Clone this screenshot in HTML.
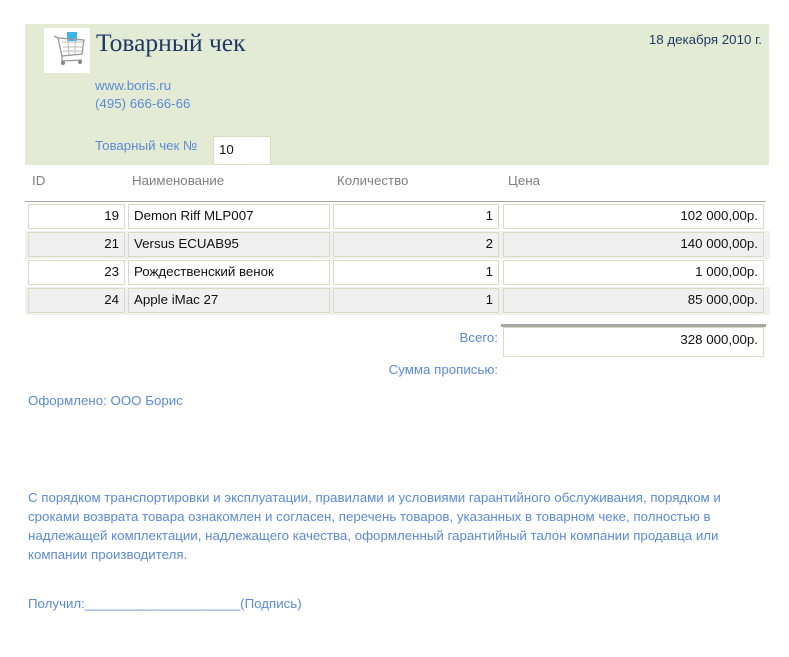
<!DOCTYPE html>
<html><head><meta charset="utf-8"><style>
body{margin:0;width:789px;height:657px;background:#fff;position:relative;font-family:"Liberation Sans",sans-serif;font-size:13.3px;overflow:hidden}
.a{position:absolute;white-space:nowrap}
.b{color:#5b8ad6}
.g{color:#7f7f7f}
.box{position:absolute;border:1px solid #ddd8c2;background:#fff;box-sizing:border-box;height:25px;line-height:22px;padding:0 5px;color:#111}
.r{text-align:right}
</style></head><body>
<div class="a" style="left:25px;top:24px;width:744px;height:141px;background:#e4ebd5"></div>
<div class="a" style="left:44px;top:28px;width:46px;height:45px;background:#fff"></div>
<svg class="a" style="left:50px;top:30px" width="40" height="40" viewBox="0 0 40 40">
<rect x="17" y="2" width="10" height="9" fill="#3cb4e8"/>
<path d="M8 8 L12 26 L32 24 L34 10 Z" fill="none" stroke="#999" stroke-width="1.3"/>
<path d="M12 12 L33 12 M13 17 L33 17 M13 21 L32 21 M18 9 L19 25 M25 9 L25 24" stroke="#bbb" stroke-width="1"/>
<path d="M4 6 L8 8 M12 26 L12 31 L32 30" stroke="#999" stroke-width="1.3" fill="none"/>
<circle cx="13" cy="33" r="2" fill="#888"/><circle cx="30" cy="32" r="2" fill="#888"/>
</svg>
<div class="a" style="left:96px;top:28px;font-family:'Liberation Serif',serif;font-size:25.5px;color:#1f3a68">Товарный чек</div>
<div class="a r" style="right:27px;top:32px;color:#1f3a68">18 декабря 2010 г.</div>
<div class="a b" style="left:95px;top:78px">www.boris.ru</div>
<div class="a b" style="left:95px;top:96px">(495) 666-66-66</div>
<div class="a b" style="left:95px;top:138px">Товарный чек №</div>
<div class="box" style="left:213px;top:136px;width:58px;height:29px;line-height:22px;padding-top:2px">10</div>
<div class="a g" style="left:32px;top:173px">ID</div>
<div class="a g" style="left:132px;top:173px">Наименование</div>
<div class="a g" style="left:337px;top:173px">Количество</div>
<div class="a g" style="left:508px;top:173px">Цена</div>
<div class="a" style="left:25px;top:201px;width:741px;height:1px;background:#a6a6a6"></div>
<div class="a" style="left:25px;top:231px;width:745px;height:28px;background:#f0f0f0"></div>
<div class="a" style="left:25px;top:287px;width:745px;height:28px;background:#f0f0f0"></div>

<div class="box r" style="left:28px;top:204px;width:97px">19</div>
<div class="box" style="left:128px;top:204px;width:202px">Demon Riff MLP007</div>
<div class="box r" style="left:333px;top:204px;width:166px">1</div>
<div class="box r" style="left:503px;top:204px;width:261px">102 000,00р.</div>

<div class="box r" style="left:28px;top:232px;width:97px;background:#f0f0f0">21</div>
<div class="box" style="left:128px;top:232px;width:202px;background:#f0f0f0">Versus ECUAB95</div>
<div class="box r" style="left:333px;top:232px;width:166px;background:#f0f0f0">2</div>
<div class="box r" style="left:503px;top:232px;width:261px;background:#f0f0f0">140 000,00р.</div>

<div class="box r" style="left:28px;top:260px;width:97px">23</div>
<div class="box" style="left:128px;top:260px;width:202px">Рождественский венок</div>
<div class="box r" style="left:333px;top:260px;width:166px">1</div>
<div class="box r" style="left:503px;top:260px;width:261px">1 000,00р.</div>

<div class="box r" style="left:28px;top:288px;width:97px;background:#f0f0f0">24</div>
<div class="box" style="left:128px;top:288px;width:202px;background:#f0f0f0">Apple iMac 27</div>
<div class="box r" style="left:333px;top:288px;width:166px;background:#f0f0f0">1</div>
<div class="box r" style="left:503px;top:288px;width:261px;background:#f0f0f0">85 000,00р.</div>

<div class="a" style="left:501px;top:324px;width:265px;height:3px;background:#a6a6a6"></div>
<div class="a b r" style="right:291px;top:330px">Всего:</div>
<div class="box r" style="left:503px;top:327px;width:261px;height:30px;line-height:24px">328 000,00р.</div>
<div class="a b r" style="right:291px;top:362px">Сумма прописью:</div>
<div class="a b" style="left:28px;top:393px">Оформлено: ООО Борис</div>
<div class="a b" style="left:28px;top:488px;line-height:19px;white-space:normal;width:735px">С порядком транспортировки и эксплуатации, правилами и условиями гарантийного обслуживания, порядком и сроками возврата товара ознакомлен и согласен, перечень товаров, указанных в товарном чеке, полностью в надлежащей комплектации, надлежащего качества, оформленный гарантийный талон компании продавца или компании производителя.</div>
<div class="a b" style="left:28px;top:596px">Получил:_____________________(Подпись)</div>
</body></html>
